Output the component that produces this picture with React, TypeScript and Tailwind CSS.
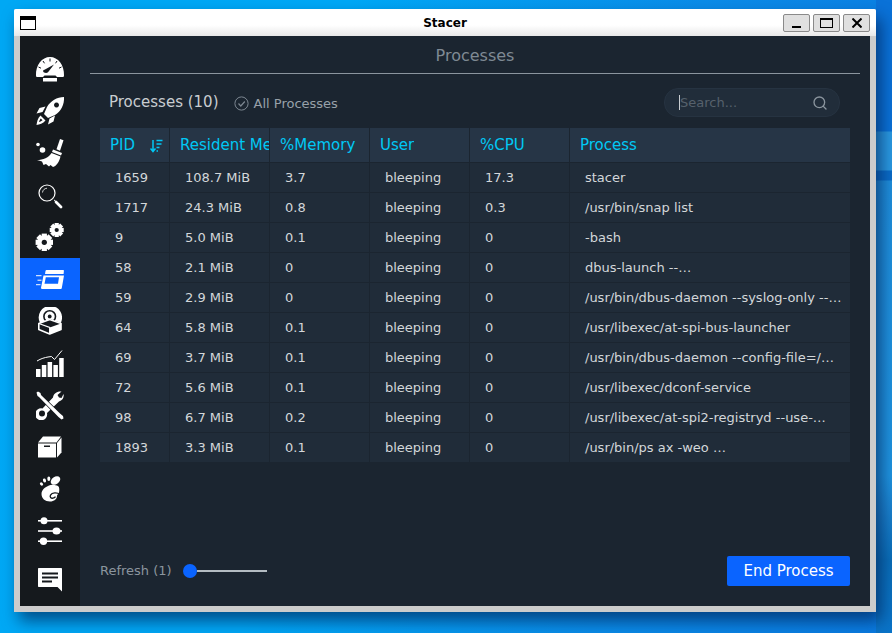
import React from "react";
import { Search } from "lucide-react";

const rows = [
  ["1659", "108.7 MiB", "3.7", "bleeping", "17.3", "stacer"],
  ["1717", "24.3 MiB", "0.8", "bleeping", "0.3", "/usr/bin/snap list"],
  ["9", "5.0 MiB", "0.1", "bleeping", "0", "-bash"],
  ["58", "2.1 MiB", "0", "bleeping", "0", "dbus-launch --…"],
  ["59", "2.9 MiB", "0", "bleeping", "0", "/usr/bin/dbus-daemon --syslog-only --…"],
  ["64", "5.8 MiB", "0.1", "bleeping", "0", "/usr/libexec/at-spi-bus-launcher"],
  ["69", "3.7 MiB", "0.1", "bleeping", "0", "/usr/bin/dbus-daemon --config-file=/…"],
  ["72", "5.6 MiB", "0.1", "bleeping", "0", "/usr/libexec/dconf-service"],
  ["98", "6.7 MiB", "0.2", "bleeping", "0", "/usr/libexec/at-spi2-registryd --use-…"],
  ["1893", "3.3 MiB", "0.1", "bleeping", "0", "/usr/bin/ps ax -weo …"],
];

const widths = ["w-[70px]", "w-[100px]", "w-[100px]", "w-[100px]", "w-[100px]", "w-[280px]"];

function Gauge() {
  return (
    <svg width="30" height="26" viewBox="0 0 30 26" fill="#fff">
      <path d="M1 19.500C.6 9 7 1 15 1s14.400 8 14 18.500c0 1-.6 1.500-1.500 1.500h-5.500l-1.500-1.500h-11L8 21H2.500C1.600 21 1 20.500 1 19.500Z" />
      <rect x="8" y="22" width="14" height="3.500" />
      <path d="M9 16.500c-1.500-1-1-2.800.5-2.800l9.500-5.200-6 7.700c-1 1-2.500 1-4 .3Z" fill="#15191d" />
      <path d="M15 2.500v3M8 5l1.500 2.300M22 5l-1.500 2.300M3.500 11l2.500 1.200M26.500 11 24 12.200" stroke="#15191d" strokeWidth="1" />
    </svg>
  );
}

function Rocket() {
  return (
    <svg width="30" height="30" viewBox="0 0 30 30" fill="#fff">
      <path d="M29 1C22 1 15.500 5 12 11l-3 7 4 4 7-3c6-3.500 9.500-10.500 9-18Zm-7.500 5.500a2.500 2.500 0 1 0 .01 0Z" fillRule="evenodd" />
      <path d="M10.500 10.500 4.500 12 1.500 17.500l6-1.500ZM20 19.500 18.500 25.500l-5.500 3 1.500-6Z" />
      <path d="M5.500 19.500l5 5C8 27.500 4.500 28.500 1.500 29c.5-3 1-6.500 4-9.500Zm.3 3C5 23.500 4.500 24.500 4 26c1.500-.5 2.500-1 3.500-1.800Z" fillRule="evenodd" />
    </svg>
  );
}

function Broom() {
  return (
    <svg width="30" height="30" viewBox="0 0 30 30" fill="#fff">
      <circle cx="3" cy="6.500" r="1.800" />
      <circle cx="7.500" cy="12" r="2.800" />
      <path d="M25 1l3.500 1.300-3.500 10.500-3.500-1.500Z" />
      <path d="M18 11.500l9 3.500-1 2.500-9-3.500Z" />
      <path d="M16.500 15l9 3.500c-1 5-4 9.500-7.500 10.500l-2.500-2-1.500 1.500-3-2.500-2.500 1-1.500-3.500-5-1.500c6 0 12-2.500 14.500-7Z" />
    </svg>
  );
}

function Magnifier() {
  return (
    <svg width="30" height="30" viewBox="0 0 30 30" fill="none" stroke="#fff">
      <circle cx="12" cy="13" r="8" strokeWidth="1.200" />
      <path d="M7.500 12.500c.2-2.500 2-4 4.500-4.300" strokeWidth=".8" />
      <path d="M19 20l1.500 1" strokeWidth="1" />
      <path d="M21 22l5 5" strokeWidth="2.800" strokeLinecap="round" />
    </svg>
  );
}

function Gear({ cx, cy, r }: { cx: number; cy: number; r: number }) {
  const teeth = [0, 45, 90, 135];
  return (
    <g>
      {teeth.map((a) => (
        <rect
          key={a}
          x={cx - r * 0.3}
          y={cy - r}
          width={r * 0.6}
          height={r * 2}
          transform={`rotate(${a} ${cx} ${cy})`}
        />
      ))}
      <circle cx={cx} cy={cy} r={r * 0.8} />
      <circle cx={cx} cy={cy} r={r * 0.3} fill="#15191d" />
    </g>
  );
}

function Gears() {
  return (
    <svg width="30" height="30" viewBox="0 0 30 30" fill="#fff">
      <Gear cx={9.300} cy={20.300} r={8.700} />
      <Gear cx={21.700} cy={8} r={7} />
    </svg>
  );
}

function ProcessIcon() {
  return (
    <svg width="28" height="19" viewBox="0 0 28 19" fill="#fff">
      <path d="M9.500 1c.1-.6.500-1 1-1H27c.6 0 1 .4 .9 1L27.600 4H9Z" />
      <path d="M7.500 5.500H28L25.800 18c-.1.6-.6 1-1.200 1H6c-.7 0-1.100-.5-1-1.200Zm2.300 1.700L8.500 13.800H22l1-6.600Z" fillRule="evenodd" />
      <rect x="0" y="5.200" width="5.500" height="1" />
      <rect x="1.500" y="9.700" width="4" height="1" />
      <rect x="0" y="14.200" width="4.500" height="1" />
    </svg>
  );
}

function Disc() {
  return (
    <svg width="24" height="28" viewBox="0 0 24 28" fill="none">
      <path d="M2 16A11.700 11.700 0 1 1 22.700 16L12 12Z" fill="#fff" />
      <circle cx="11.700" cy="9.500" r="5.800" stroke="#15191d" strokeWidth="1.600" />
      <circle cx="11.700" cy="9.500" r="1.900" fill="#15191d" />
      <path d="M.8 16.500 11.700 12.500 23 16.500V22.500L11.700 27 .8 22.500Z" fill="#15191d" stroke="#fff" strokeWidth="1.600" strokeLinejoin="round" />
      <path d="M11.700 20.500 23 16.500V22.500L11.700 27Z" fill="#fff" />
      <path d="M.8 16.500 11.700 20.500V27" stroke="#fff" strokeWidth="1.300" />
    </svg>
  );
}

function Chart() {
  return (
    <svg width="28" height="27" viewBox="0 0 28 27" fill="#fff">
      <rect x="0" y="19" width="4.500" height="8" />
      <rect x="5.800" y="15" width="4.500" height="12" />
      <rect x="11.600" y="12" width="4.500" height="15" />
      <rect x="17.400" y="15" width="4.500" height="12" />
      <rect x="23.200" y="8" width="4.500" height="19" />
      <path d="M1 11c4-2.500 8-3.500 11-4l3.500-.5 3 3L26 .5" fill="none" stroke="#fff" strokeWidth="1" />
    </svg>
  );
}

function Tools() {
  return (
    <svg width="28" height="29" viewBox="0 0 28 29" fill="#fff">
      <path d="M27.500 3c.8 3.500-1 6.500-4.500 7.500L11 22a6 6 0 1 1-4.500-4.500L17 6.500C17.500 2.500 21 0 25.500.5L21.500 4l1.500 2.500 2.500.5Z" />
      <circle cx="6" cy="22.500" r="3" fill="#15191d" />
      <path d="M.5 1.500 2 .5 4.500 2 5 4 24 22.500 27 25 27.500 27.500 25.500 28.500 22.500 26 3 6 1.500 5Z" stroke="#15191d" strokeWidth="1.400" paintOrder="stroke" />
    </svg>
  );
}

function BoxIcon() {
  return (
    <svg width="24" height="22" viewBox="0 0 24 22" fill="#fff">
      <path d="M0 6.500 5 .5h18l-4.500 6Z" />
      <path d="M0 7.500h18V21.500H0Zm6 2V11h6V9.500Z" fillRule="evenodd" />
      <path d="M19 7 23.500 1.500V16.500L19 21.500Z" />
    </svg>
  );
}

function Foot() {
  return (
    <svg width="22" height="26" viewBox="0 0 22 26" fill="#fff">
      <ellipse cx="16.500" cy="4.500" rx="5.200" ry="3.600" transform="rotate(-35 16.500 4.500)" />
      <ellipse cx="9.800" cy="2.800" rx="1.500" ry="2.200" />
      <ellipse cx="5.500" cy="4.500" rx="1.500" ry="2" transform="rotate(-20 5.500 4.500)" />
      <ellipse cx="2.500" cy="8" rx="1.400" ry="1.800" transform="rotate(-45 2.500 8)" />
      <path d="M10 9.500c2.500-1.500 7-.5 9 .5 1.500 1 1.500 4 1 6.500-.3 1.500-2 2-2 3.500 0 3-3 5.500-7 5.500-5 0-8.500-3-8.500-7.500C2.500 14 6 11 10 9.500Z" />
      <path d="M21 18.500c-3-2.500-8-2-9.500.6-1 2 .5 3.400 2.500 3.100 1.200-.2 2-.8 2.500-1.500" fill="none" stroke="#15191d" strokeWidth="1.300" />
    </svg>
  );
}

function Sliders() {
  return (
    <svg width="24" height="28" viewBox="0 0 24 28" fill="#fff">
      <rect x="0" y="3" width="24" height="1.600" />
      <rect x="0" y="13.200" width="24" height="1.600" />
      <rect x="0" y="23.400" width="24" height="1.600" />
      <circle cx="6" cy="3.800" r="3.500" />
      <ellipse cx="18.500" cy="14" rx="4" ry="3.500" />
      <circle cx="5.500" cy="24.200" r="3.700" />
    </svg>
  );
}

function Feedback() {
  return (
    <svg width="24" height="24" viewBox="0 0 24 24">
      <path d="M1 0h22c.6 0 1 .4 1 1v22.500L19.500 19H1c-.6 0-1-.4-1-1V1c0-.6.4-1 1-1Z" fill="#fff" />
      <rect x="4" y="4.500" width="16" height="2" fill="#15191d" />
      <rect x="4" y="8.500" width="16" height="2" fill="#15191d" />
      <rect x="4" y="12.500" width="10" height="2" fill="#15191d" />
    </svg>
  );
}

const navIcons = [
  <Gauge />,
  <Rocket />,
  <Broom />,
  <Magnifier />,
  <Gears />,
  <ProcessIcon />,
  <Disc />,
  <Chart />,
  <Tools />,
  <BoxIcon />,
  <Foot />,
  <Sliders />,
];

function Sidebar() {
  return (
    <div className="w-[60px] shrink-0 bg-[#15191d] flex flex-col pt-[12px] pb-[14px]">
      {navIcons.map((icon, i) => (
        <div
          key={i}
          className={
            i === 5
              ? "h-[42px] flex items-center justify-center bg-[#0a64ff]"
              : "h-[42px] flex items-center justify-center"
          }
        >
          {icon}
        </div>
      ))}
      <div className="mt-auto h-[24px] flex items-center justify-center">
        <Feedback />
      </div>
    </div>
  );
}

function SortIcon() {
  return (
    <svg width="13" height="14" viewBox="0 0 13 14" fill="none" stroke="#00c8f5" strokeWidth="1.500">
      <path d="M3 1v11M.5 9.500 3 12.500l2.500-3" />
      <path d="M6.500 1.500h6M6.500 5h5M6.500 8.500h3M6.500 12h1.500" />
    </svg>
  );
}

function CheckCircle() {
  return (
    <svg width="15" height="15" viewBox="0 0 15 15" fill="none">
      <circle cx="7.500" cy="7.500" r="6.600" stroke="#7d8791" />
      <path d="M4.500 7.500 6.800 10l4-4.500" stroke="#7d8791" strokeWidth="1.200" />
    </svg>
  );
}

function ProcessTable() {
  const headers = ["PID", "Resident Memory", "%Memory", "User", "%CPU", "Process"];
  return (
    <div className="w-[750px] text-[13px]">
      <div className="flex h-[35px] bg-[#263546] border-b border-[#1b2530]">
        {headers.map((h, i) => (
          <div
            key={h}
            className={`${widths[i]} shrink-0 flex items-center justify-between pl-[10px] text-[15px] text-[#00c8f5] overflow-hidden whitespace-nowrap ${i < 5 ? "border-r border-[#1b2530]" : ""}`}
          >
            <span className="block min-w-0 overflow-hidden">{h}</span>
            {i === 0 && (
              <span className="mr-[6px] mt-[1px]">
                <SortIcon />
              </span>
            )}
          </div>
        ))}
      </div>
      {rows.map((row) => (
        <div key={row[0]} className="flex h-[30px] bg-[#202c39] border-b border-[#1b2530]">
          {row.map((cell, i) => (
            <div
              key={i}
              className={`${widths[i]} shrink-0 flex items-center pl-[15px] text-[#d3d7da] overflow-hidden whitespace-nowrap ${i < 5 ? "border-r border-[#1b2530]" : ""}`}
            >
              {cell}
            </div>
          ))}
        </div>
      ))}
    </div>
  );
}

export default function App() {
  return (
    <div
      className="relative w-[892px] h-[633px] overflow-hidden bg-no-repeat [background-size:16px_100%,100%_100%] [background-position:right_top,left_top] bg-[linear-gradient(180deg,#0a72d8_0px,#0a72d8_131px,#2a9ae2_132px,#2a9ae2_170px,#0a6cc8_171px,#0a6cc8_180px,#1f8fdc_181px,#1f94e0_476px,#1a80cc_513px,#0a6eb8_560px,#0a74c8_633px),linear-gradient(100deg,#00a8f4_0%,#00a8f6_35%,#0a8ce8_70%,#0a7ae0_100%)]"
      style={{ fontFamily: '"DejaVu Sans", sans-serif' }}
    >
      {/* window sits on the desktop */}
      <div className="absolute left-[14px] top-[9px] w-[862px] h-[603px] rounded-t-[2px] flex flex-col bg-[#cccccc] shadow-[5px_9px_16px_rgba(0,30,80,0.65)]">
        <div className="relative h-[27px] shrink-0 rounded-t-[2px] bg-[linear-gradient(#ffffff_60%,#e8e8e8)] flex items-center justify-center">
          <div className="absolute left-[6px] top-[7px] w-[16px] h-[14px] border border-black border-t-[4px] bg-white" />
          <span className="text-[12px] font-bold text-black mt-[1px]">Stacer</span>
          <div className="absolute right-[6px] top-[5px] flex gap-[3px]">
            <div className="w-[27px] h-[18px] bg-[#e0e0e0] border border-[#8a8a8a] rounded-[2px] flex items-end justify-center pb-[3px]">
              <div className="w-[9px] h-[2px] bg-black" />
            </div>
            <div className="w-[27px] h-[18px] bg-[#e0e0e0] border border-[#8a8a8a] rounded-[2px] flex items-center justify-center">
              <div className="w-[13px] h-[10px] border border-black border-t-2" />
            </div>
            <div className="w-[27px] h-[18px] bg-[#e0e0e0] border border-[#8a8a8a] rounded-[2px] flex items-center justify-center">
              <svg width="10" height="10" viewBox="0 0 10 10" stroke="#000" strokeWidth="2">
                <path d="M.5.500l9 9M9.500.500l-9 9" />
              </svg>
            </div>
          </div>
        </div>
        <div className="flex-1 flex mx-[6px] mb-[6px] min-h-0">
          <Sidebar />
          <div className="flex-1 bg-[#1b2530] flex flex-col">
            <div className="h-[38px] pt-[2px] mx-[10px] border-b border-[#8b959e] flex items-center justify-center text-[16px] text-[#7f8a94]">
              Processes
            </div>
            <div className="h-[54px] flex items-center pl-[29px] pr-[30px]">
              <span className="mt-[3px] text-[15px] text-[#c9cdd1]">Processes (10)</span>
              <span className="ml-[15px] mt-[5px] flex items-center gap-[5px] text-[13px] text-[#98a1a9]">
                <CheckCircle />
                All Processes
              </span>
              <div className="ml-auto mt-[3px] w-[176px] h-[29px] rounded-[14px] bg-[#212d3a] border border-[#263341] flex items-center pl-[14px] pr-[11px]">
                <span className="w-px h-[15px] bg-[#c9cdd1]" />
                <span className="text-[13px] text-[#56616c]">Search...</span>
                <Search className="ml-auto text-[#8b959e]" size={16} />
              </div>
            </div>
            <div className="pl-[20px]">
              <ProcessTable />
            </div>
            <div className="mt-auto flex items-center justify-between pl-[20px] pr-[20px] pb-[20px]">
              <div className="flex items-center">
                <span className="text-[13px] text-[#8b959e]">Refresh (1)</span>
                <div className="ml-[11px] flex items-center">
                  <div className="w-[14px] h-[14px] rounded-full bg-[#0a64ff]" />
                  <div className="w-[70px] h-[2px] bg-[#b4bcc2]" />
                </div>
              </div>
              <button className="w-[123px] h-[30px] rounded-[2px] bg-[#0a64ff] text-[15px] text-white">
                End Process
              </button>
            </div>
          </div>
        </div>
      </div>
    </div>
  );
}
